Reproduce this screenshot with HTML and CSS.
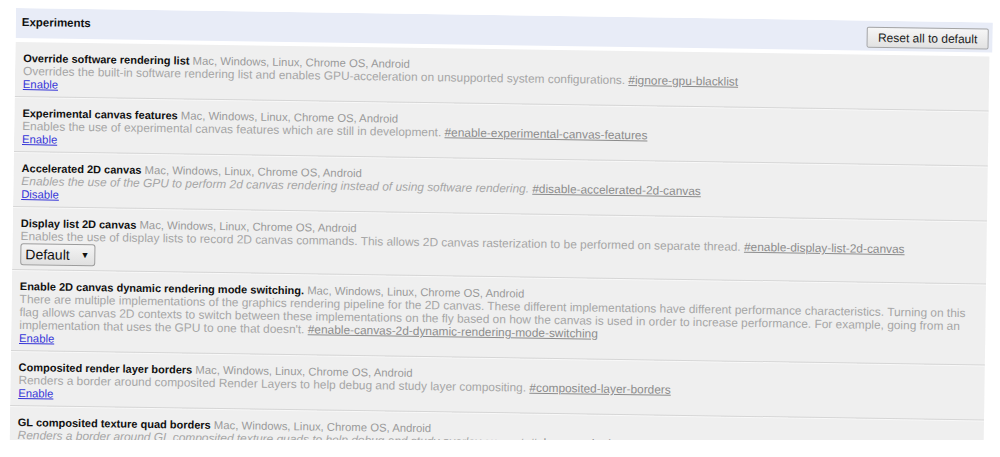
FILE: index.html
```html
<!DOCTYPE html>
<html>
<head>
    <title>Experiments</title>
    <link rel="stylesheet" href="styles.css">
</head>
<body>

    <div class="page">
        <div class="shot">
            <!-- Header band -->
            <div class="header">
                <h1>Experiments</h1>
                <button class="reset">Reset all to default</button>
            </div>

            <!-- Experiment list -->
            <div class="list">
                <div class="exp">
                    <div><span class="name">Override software rendering list</span> <span class="platforms">Mac, Windows, Linux, Chrome OS, Android</span></div>
                    <div class="desc">Overrides the built-in software rendering list and enables GPU-acceleration on unsupported system configurations. <a class="perm" href="#">#ignore-gpu-blacklist</a></div>
                    <a class="toggle" href="#">Enable</a>
                </div>
                <div class="exp">
                    <div><span class="name">Experimental canvas features</span> <span class="platforms">Mac, Windows, Linux, Chrome OS, Android</span></div>
                    <div class="desc">Enables the use of experimental canvas features which are still in development. <a class="perm" href="#">#enable-experimental-canvas-features</a></div>
                    <a class="toggle" href="#">Enable</a>
                </div>
                <div class="exp">
                    <div><span class="name">Accelerated 2D canvas</span> <span class="platforms">Mac, Windows, Linux, Chrome OS, Android</span></div>
                    <div class="desc italic">Enables the use of the GPU to perform 2d canvas rendering instead of using software rendering. <a class="perm" href="#">#disable-accelerated-2d-canvas</a></div>
                    <a class="toggle" href="#">Disable</a>
                </div>
                <div class="exp with-select">
                    <div><span class="name">Display list 2D canvas</span> <span class="platforms">Mac, Windows, Linux, Chrome OS, Android</span></div>
                    <div class="desc">Enables the use of display lists to record 2D canvas commands. This allows 2D canvas rasterization to be performed on separate thread. <a class="perm" href="#">#enable-display-list-2d-canvas</a></div>
                    <div class="select"><span>Default</span><span class="arrow">&#9660;</span></div>
                </div>
                <div class="exp">
                    <div><span class="name">Enable 2D canvas dynamic rendering mode switching.</span> <span class="platforms">Mac, Windows, Linux, Chrome OS, Android</span></div>
                    <div class="desc">There are multiple implementations of the graphics rendering pipeline for the 2D canvas. These different implementations have different performance characteristics. Turning on this flag allows canvas 2D contexts to switch between these implementations on the fly based on how the canvas is used in order to increase performance. For example, going from an implementation that uses the GPU to one that doesn't. <a class="perm" href="#">#enable-canvas-2d-dynamic-rendering-mode-switching</a></div>
                    <a class="toggle" href="#">Enable</a>
                </div>
                <div class="exp">
                    <div><span class="name">Composited render layer borders</span> <span class="platforms">Mac, Windows, Linux, Chrome OS, Android</span></div>
                    <div class="desc">Renders a border around composited Render Layers to help debug and study layer compositing. <a class="perm" href="#">#composited-layer-borders</a></div>
                    <a class="toggle" href="#">Enable</a>
                </div>
                <div class="exp">
                    <div><span class="name">GL composited texture quad borders</span> <span class="platforms">Mac, Windows, Linux, Chrome OS, Android</span></div>
                    <div class="desc italic">Renders a border around GL composited texture quads to help debug and study overlay support. <a class="perm" href="#">#gl-composited-texture-quad-borders</a></div>
                    <a class="toggle" href="#">Enable</a>
                </div>
            </div>
        </div>
    </div>

</body>
</html>
```

FILE: styles.css
```css
/* Page */
body, h1 {
    margin: 0;
    padding: 0;
    font: inherit;
}

body {
    background: #fff;
    font-family: "Liberation Sans", Arial, sans-serif;
    font-size: 11.3px;
    color: #222;
}

.page {
    padding: 8px 0 0 16px;
}

/* The screenshot is tilted a little clockwise */
.shot {
    width: 977px;
    height: 432px;
    overflow: hidden;
    transform: rotate(0.85deg);
    transform-origin: 0 0;
}

/* Header band */
.header {
    height: 30px;
    background: #e8ecf7;
    display: flex;
    justify-content: space-between;
    align-items: flex-start;
    padding: 0 4px 0 6px;
}

.header h1 {
    font-weight: bold;
    font-size: 11.5px;
    line-height: 14px;
    padding-top: 7px;
    color: #111;
}

.reset {
    margin-top: 6px;
    width: 122px;
    height: 21px;
    padding: 0;
    font-family: "Liberation Sans", Arial, sans-serif;
    font-size: 12px;
    color: #222;
    background: linear-gradient(#f6f6f6, #e2e2e2);
    border: 1px solid #a4a4a4;
    border-radius: 2px;
}

/* Experiment list */
.list {
    margin-top: 4px;
    margin-right: 3px;
    background: #efefef;
}

.exp {
    padding: 10px 8px 5px 8px;
    line-height: 13px;
    border-bottom: 1px solid #d6d6d6;
    box-shadow: 0 1px 0 #f8f8f8;
}

.exp.with-select {
    padding-bottom: 4px;
}

.name {
    font-weight: bold;
    font-size: 11px;
    color: #111;
}

.platforms {
    color: #9a9a9a;
}

.desc {
    font-size: 11.9px;
    color: #a6a6a6;
}

.desc.italic {
    font-style: italic;
}

.perm {
    color: #8c8c8c;
    text-decoration: underline;
    font-style: normal;
}

.toggle {
    display: inline-block;
    color: #3535d8;
    text-decoration: underline;
}

.select {
    display: flex;
    align-items: center;
    justify-content: space-between;
    width: 64px;
    height: 20px;
    padding: 0 5px 0 4px;
    font-size: 14px;
    color: #111;
    background: linear-gradient(#f4f4f4, #e0e0e0);
    border: 1px solid #9c9c9c;
    border-radius: 3px;
}

.select .arrow {
    font-size: 9px;
}
```
